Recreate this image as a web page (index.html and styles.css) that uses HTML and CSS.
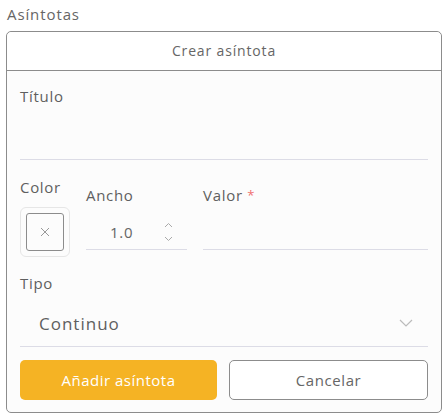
FILE: index.html
```html
<!DOCTYPE html>
<html lang="es">
<head>
<meta charset="utf-8">
<link rel="stylesheet" href="styles.css">
</head>
<body>
<div class="section-title">Asíntotas</div>
<div class="panel">
  <div class="panel-head">Crear asíntota</div>
  <div class="panel-body">
    <div class="field field-title">
      <div class="label">Título</div>
      <div class="input tall"></div>
    </div>
    <div class="row">
      <div class="col col-color">
        <div class="label">Color</div>
        <div class="swatch"><div class="swatch-inner">
          <svg width="10" height="10" viewBox="0 0 10 10"><path d="M1 1L9 9M9 1L1 9" stroke="#999" stroke-width="1" fill="none"/></svg>
        </div></div>
      </div>
      <div class="col col-width">
        <div class="label low">Ancho</div>
        <div class="input num">
          <span class="num-val">1.0</span>
          <span class="spin">
            <svg width="9" height="20" viewBox="0 0 9 20"><path d="M1 5L4.5 1.5L8 5M1 15L4.5 18.5L8 15" stroke="#aaa" stroke-width="1" fill="none"/></svg>
          </span>
        </div>
      </div>
      <div class="col col-value">
        <div class="label low">Valor <span class="req">*</span></div>
        <div class="input num"></div>
      </div>
    </div>
    <div class="field field-type">
      <div class="label">Tipo</div>
      <div class="input select">
        <span class="select-val">Continuo</span>
        <svg width="14" height="8" viewBox="0 0 14 8"><path d="M1 1L7 7L13 1" stroke="#bbb" stroke-width="1.2" fill="none"/></svg>
      </div>
    </div>
    <div class="actions">
      <button class="btn btn-primary">Añadir asíntota</button>
      <button class="btn btn-secondary">Cancelar</button>
    </div>
  </div>
</div>
</body>
</html>
```
FILE: styles.css
```css
* { box-sizing: border-box; }
body {
  margin: 0;
  width: 448px;
  height: 420px;
  background: #fff;
  font-family: "Open Sans", "Noto Sans", sans-serif;
  color: #5f5f5f;
  letter-spacing: 0.7px;
}
.section-title {
  padding: 4px 0 0 7px;
  height: 31px;
  font-size: 15px;
  line-height: 20px;
  color: #666;
  letter-spacing: 0.9px;
}
.panel {
  margin: 0 6px;
  border: 1px solid #8c8c8c;
  border-radius: 5px;
  background: #fcfcfc;
}
.panel-head {
  height: 39px;
  border-bottom: 1px solid #8c8c8c;
  text-align: center;
  font-size: 14px;
  line-height: 38px;
  color: #666;
  background: #fff;
  border-radius: 5px 5px 0 0;
  letter-spacing: 0.85px;
}
.panel-body {
  padding: 15px 13px 12px 13px;
}
.label {
  font-size: 15px;
  line-height: 20px;
  color: #5f5f5f;
}
.label.low { margin-top: 8px; }
.req { color: #f07070; font-size: 13px; vertical-align: top; }
.input {
  border-bottom: 1px solid #dcdce6;
}
.input.tall { height: 54px; }
.row {
  display: flex;
  gap: 17px;
  margin-top: 17px;
}
.col-color { width: 49px; }
.col-width { width: 101px; }
.col-value { flex: 1; margin-left: -1px; }
.swatch {
  margin-top: 10px;
  width: 50px;
  height: 50px;
  border: 1px solid #e6e6e6;
  border-radius: 6px;
  padding: 5px;
}
.swatch-inner {
  width: 38px;
  height: 38px;
  border: 1px solid #8c8c8c;
  border-radius: 3px;
  display: flex;
  align-items: center;
  justify-content: center;
}
.input.num {
  height: 45px;
  display: flex;
  align-items: center;
  position: relative;
}
.num-val {
  padding-left: 24px;
  padding-top: 9px;
  font-size: 15px;
  color: #666;
  flex: 1;
}
.spin {
  display: flex;
  padding-top: 10px;
  margin-right: 14px;
}
.field-type { margin-top: 16px; }
.input.select {
  height: 54px;
  display: flex;
  align-items: center;
  justify-content: space-between;
  padding: 7px 15px 0 19px;
}
.select-val {
  font-size: 17px;
  color: #5f5f5f;
  letter-spacing: 1px;
}
.actions {
  display: flex;
  gap: 12px;
  margin-top: 13px;
}
.btn {
  height: 40px;
  border-radius: 5px;
  font-family: "Open Sans", "Noto Sans", sans-serif;
  font-size: 15px;
  letter-spacing: 0.5px;
  cursor: pointer;
}
.btn-primary {
  width: 197px;
  background: #f5b324;
  border: none;
  color: #fff;
}
.btn-secondary {
  flex: 1;
  background: #fff;
  border: 1px solid #8c8c8c;
  color: #666;
  letter-spacing: 0.6px;
}
```
